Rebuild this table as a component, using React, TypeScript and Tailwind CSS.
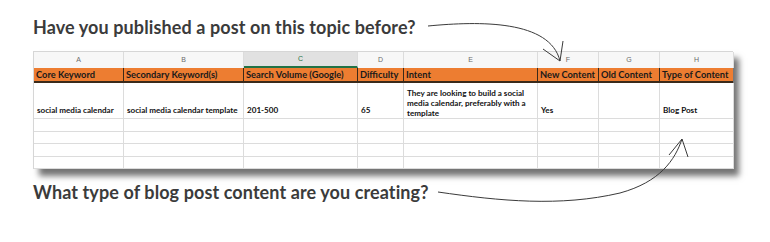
import React from "react";

const cols = [
  { l: "A", w: 90, h: "Core Keyword", v: "social media calendar" },
  { l: "B", w: 120, h: "Secondary Keyword(s)", v: "social media calendar template" },
  { l: "C", w: 114, h: "Search Volume (Google)", v: "201-500" },
  { l: "D", w: 46, h: "Difficulty", v: "65" },
  { l: "E", w: 134, h: "Intent", v: "" },
  { l: "F", w: 61, h: "New Content", v: "Yes" },
  { l: "G", w: 61, h: "Old Content", v: "" },
  { l: "H", w: 74, h: "Type of Content", v: "Blog Post" },
];

const tmpl = "90px 120px 114px 46px 134px 61px 61px 74px";

export default function App() {
  return (
    <div
      className="relative w-[770px] h-[242px] bg-white overflow-hidden"
      style={{ fontFamily: "Lato, 'Liberation Sans', sans-serif" }}
    >
      <div className="pl-[33px] pt-[16px]">
        <div className="text-[18px] leading-[22px] font-bold text-[#3b3b3b] tracking-[0.1px]">
          Have you published a post on this topic before?
        </div>
        <div className="mt-[13px] w-[700px] border-t border-l border-[#d6d6d6] bg-white shadow-[6px_7px_6px_rgba(0,0,0,0.55)]">
          <div className="grid" style={{ gridTemplateColumns: tmpl }}>
            {cols.map((c) => (
              <div
                key={c.l}
                className={`h-[16px] flex items-center justify-center text-[7px] border-r border-[#dcdcdc] ${
                  c.l === "C" ? "bg-[#e1e1e1] border-b-2 border-b-[#217346] text-[#217346]" : "bg-[#f7f7f7] text-[#6b6b6b]"
                }`}
                style={{ fontFamily: "'Liberation Sans', sans-serif" }}
              >
                {c.l}
              </div>
            ))}
          </div>
          <div
            className="grid bg-[#ed7d31] border-b-2 border-[#3a2a1a]"
            style={{ gridTemplateColumns: tmpl }}
          >
            {cols.map((c, i) => (
              <div
                key={c.l}
                className={`h-[13px] flex items-center pl-[2px] text-[9.3px] font-bold text-[#1a1a1a] whitespace-nowrap overflow-hidden ${
                  i < 7 ? "border-r border-[#3a2a1a]" : ""
                }`}
              >
                {c.h}
              </div>
            ))}
          </div>
          <div className="grid" style={{ gridTemplateColumns: tmpl }}>
            {cols.map((c) => (
              <div
                key={c.l}
                className="h-[36px] flex items-end pb-[2px] pl-[3px] text-[8.1px] font-bold text-[#111] border-r border-b border-[#dcdcdc] whitespace-nowrap"
              >
                {c.l === "E" ? (
                  <div className="self-start pt-[5px] leading-[10px] whitespace-normal w-[128px]">
                    They are looking to build a social media calendar, preferably with a template
                  </div>
                ) : (
                  c.v
                )}
              </div>
            ))}
          </div>
          {[0, 1, 2, 3].map((r) => (
            <div key={r} className="grid" style={{ gridTemplateColumns: tmpl }}>
              {cols.map((c) => (
                <div key={c.l} className="h-[12.5px] border-r border-b border-[#dcdcdc]" />
              ))}
            </div>
          ))}
        </div>
        <div className="mt-[12px] text-[18px] leading-[22px] font-bold text-[#3b3b3b] tracking-[0.1px]">
          What type of blog post content are you creating?
        </div>
      </div>
      <svg className="absolute left-0 top-0" width="770" height="242" fill="none" stroke="#3a3a3a" strokeWidth="1">
        <path d="M428 26 C 480 21, 550 20, 560 61" />
        <path d="M560 61 L543 49 M560 61 L563 41" />
        <path d="M438 192 C 500 201, 560 207, 620 193 C 660 182, 675 160, 682 139" />
        <path d="M682 139 L669 155 M682 139 L688 157" />
      </svg>
    </div>
  );
}
